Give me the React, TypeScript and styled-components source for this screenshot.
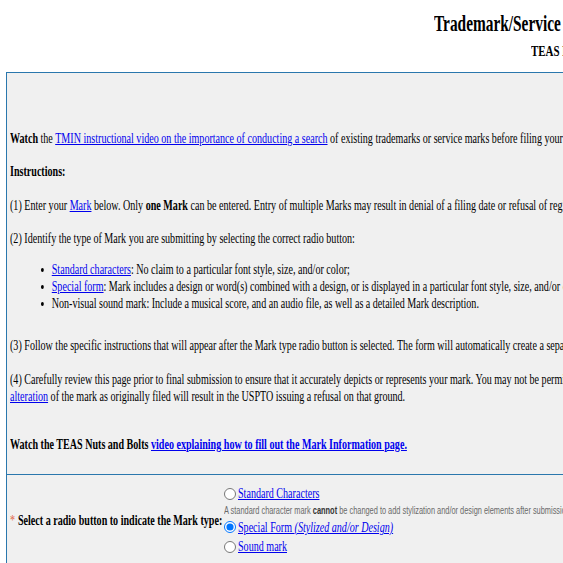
import React from 'react';
import styled, { createGlobalStyle } from 'styled-components';

const GlobalStyle = createGlobalStyle`
  html, body {
    margin: 0;
    padding: 0;
    background: #ffffff;
    overflow: hidden;
  }
  body {
    font-family: "Liberation Serif", "Times New Roman", serif;
    color: #000;
  }
`;

// the page renders its serif in a narrow, condensed face
const Squeeze = styled.div<{ $x: number }>`
  transform: scaleX(${(p) => p.$x});
  transform-origin: 0 50%;
  white-space: nowrap;
`;

const InlineSqueeze = styled.span<{ $x: number }>`
  display: inline-block;
  transform: scaleX(${(p) => p.$x});
  transform-origin: 0 50%;
  white-space: nowrap;
`;

const Page = styled.div`
  width: 1100px;
  padding: 0 0 0 6px;
`;

const Header = styled.header`
  height: 72px;
  display: flex;
  flex-direction: column;
`;

const Title = styled.h1<{ $indent: number; $size: number; $top: number }>`
  margin: ${(p) => p.$top}px 0 0 ${(p) => p.$indent}px;
  font-size: ${(p) => p.$size}px;
  line-height: 1;
  font-weight: bold;
  white-space: nowrap;
`;

const Box = styled.div`
  border: 1px solid #2a77ad;
  background: #f0f0f0;
`;

const Intro = styled.section`
  padding: 57px 3px 21px 3px;
  font-size: 14px;
  line-height: 17px;
`;

const Para = styled.p<{ $gap?: number }>`
  margin: ${(p) => p.$gap ?? 16.3}px 0 0 0;
  &:first-child {
    margin-top: 0;
  }
`;

const Link = styled.a`
  color: #0000ee;
  text-decoration: underline;
`;

const BulletList = styled.ul`
  margin: 14px 0 0 0;
  padding-left: 58px;
  list-style: disc;
`;

const Row = styled.div`
  border-top: 1px solid #2a77ad;
  display: flex;
  align-items: center;
  padding: 9px 0 14px 0;
`;

const LabelCell = styled.div`
  width: 214px;
  flex: none;
  padding: 2px 0 0 3px;
  font-size: 14px;
  font-weight: bold;
`;

const Star = styled.span`
  color: #e2643f;
  font-weight: normal;
  margin-right: 4px;
`;

const Choices = styled.div`
  display: flex;
  flex-direction: column;
`;

const Choice = styled.label`
  display: flex;
  align-items: center;
  font-size: 14px;
  line-height: 19.5px;
  input {
    margin: 0 2px 0 0;
    width: 12px;
    height: 12px;
  }
`;

const Hint = styled.div`
  font-family: "Liberation Sans", Arial, sans-serif;
  font-size: 10px;
  color: #6a6a6a;
  margin: 0;
  line-height: 14px;
  b {
    color: #333;
  }
`;

const App: React.FC = () => {
  return (
    <Page>
      <GlobalStyle />
      <Header>
        <Title $indent={428} $size={24} $top={11}>
          <InlineSqueeze $x={0.64}>Trademark/Service Mark Application, Principal Register</InlineSqueeze>
        </Title>
        <Title $indent={525} $size={15} $top={9}>
          <InlineSqueeze $x={0.73}>TEAS Plus Application</InlineSqueeze>
        </Title>
      </Header>
      <Box>
        <Intro>
          <Squeeze $x={0.72}>
            <Para>
              <b>Watch</b> the{' '}
              <Link href="#">TMIN instructional video on the importance of conducting a search</Link> of
              existing trademarks or service marks before filing your application.
            </Para>
            <Para>
              <b>Instructions:</b>
            </Para>
            <Para>
              (1) Enter your <Link href="#">Mark</Link> below. Only <b>one Mark</b> can be entered. Entry of
              multiple Marks may result in denial of a filing date or refusal of registration.
            </Para>
            <Para>(2) Identify the type of Mark you are submitting by selecting the correct radio button:</Para>
            <BulletList>
              <li>
                <Link href="#">Standard characters</Link>: No claim to a particular font style, size, and/or color;
              </li>
              <li>
                <Link href="#">Special form</Link>: Mark includes a design or word(s) combined with a design, or is
                displayed in a particular font style, size, and/or color;
              </li>
              <li>
                Non-visual sound mark: Include a musical score, and an audio file, as well as a detailed Mark
                description.
              </li>
            </BulletList>
            <Para $gap={25.5}>
              (3) Follow the specific instructions that will appear after the Mark type radio button is selected.
              The form will automatically create a separate section.
            </Para>
            <Para>
              (4) Carefully review this page prior to final submission to ensure that it accurately depicts or
              represents your mark. You may not be permitted to change it later. A material
              <br />
              <Link href="#">alteration</Link> of the mark as originally filed will result in the USPTO issuing a
              refusal on that ground.
            </Para>
            <Para $gap={31.5}>
              <b>
                Watch the TEAS Nuts and Bolts{' '}
                <Link href="#">video explaining how to fill out the Mark Information page.</Link>
              </b>
            </Para>
          </Squeeze>
        </Intro>
        <Row>
          <LabelCell>
            <Squeeze $x={0.72}>
              <Star>*</Star>Select a radio button to indicate the Mark type:
            </Squeeze>
          </LabelCell>
          <Choices>
            <Choice>
              <input type="radio" name="marktype" />
              <InlineSqueeze $x={0.72}>
                <Link href="#">Standard Characters</Link>
              </InlineSqueeze>
            </Choice>
            <Hint>
              <Squeeze $x={0.74}>
                A standard character mark <b>cannot</b> be changed to add stylization and/or design elements after
                submission.
              </Squeeze>
            </Hint>
            <Choice>
              <input type="radio" name="marktype" defaultChecked />
              <InlineSqueeze $x={0.72}>
                <Link href="#">
                  Special Form <i>(Stylized and/or Design)</i>
                </Link>
              </InlineSqueeze>
            </Choice>
            <Choice>
              <input type="radio" name="marktype" />
              <InlineSqueeze $x={0.72}>
                <Link href="#">Sound mark</Link>
              </InlineSqueeze>
            </Choice>
          </Choices>
        </Row>
      </Box>
    </Page>
  );
};

export default App;
